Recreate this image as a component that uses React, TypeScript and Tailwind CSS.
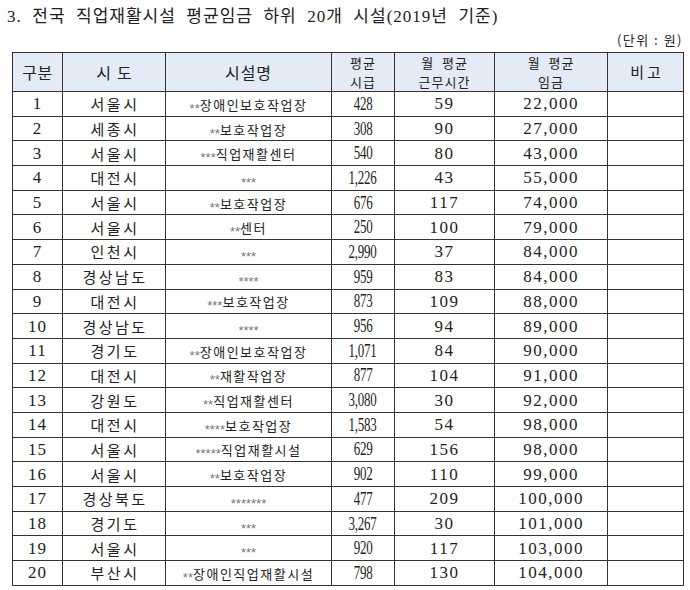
const rows: [number, string, string, string, string, string][] = [
  [1, "서울시", "**|장애인보호작업장", "428", "59", "22,000"],
  [2, "세종시", "**|보호작업장", "308", "90", "27,000"],
  [3, "서울시", "***|직업재활센터", "540", "80", "43,000"],
  [4, "대전시", "***|", "1,226", "43", "55,000"],
  [5, "서울시", "**|보호작업장", "676", "117", "74,000"],
  [6, "서울시", "**|센터", "250", "100", "79,000"],
  [7, "인천시", "***|", "2,990", "37", "84,000"],
  [8, "경상남도", "****|", "959", "83", "84,000"],
  [9, "대전시", "***|보호작업장", "873", "109", "88,000"],
  [10, "경상남도", "****|", "956", "94", "89,000"],
  [11, "경기도", "**|장애인보호작업장", "1,071", "84", "90,000"],
  [12, "대전시", "**|재활작업장", "877", "104", "91,000"],
  [13, "강원도", "**|직업재활센터", "3,080", "30", "92,000"],
  [14, "대전시", "****|보호작업장", "1,583", "54", "98,000"],
  [15, "서울시", "*****|직업재활시설", "629", "156", "98,000"],
  [16, "서울시", "**|보호작업장", "902", "110", "99,000"],
  [17, "경상북도", "*******|", "477", "209", "100,000"],
  [18, "경기도", "***|", "3,267", "30", "101,000"],
  [19, "서울시", "***|", "920", "117", "103,000"],
  [20, "부산시", "**|장애인직업재활시설", "798", "130", "104,000"],
];

const serif = "font-['Liberation_Serif','Noto_Sans_CJK_KR',serif]";
const kr = "font-['Noto_Sans_CJK_KR','Liberation_Sans',sans-serif]";

const App = () => {
  return (
    <div className="w-[690px] h-[590px] bg-white text-[#222] overflow-hidden">
      {/* Title */}
      <h1 className={`pl-[7px] pt-[6px] h-[28px] text-[17px] leading-[22px] tracking-[1px] font-normal ${serif}`}>
        3.&nbsp; 전국&nbsp; 직업재활시설&nbsp; 평균임금&nbsp; 하위&nbsp; 20개&nbsp; 시설(2019년&nbsp; 기준)
      </h1>
      <div className={`h-[24px] leading-[24px] text-right pr-[7px] text-[13px] tracking-[1.5px] ${kr}`}>
        (단위&nbsp;:&nbsp;원)
      </div>

      {/* Table */}
      <table className="ml-[12px] w-[671px] table-fixed border-collapse border border-[#333]">
        <colgroup>
          <col className="w-[50px]" />
          <col className="w-[103px]" />
          <col className="w-[166px]" />
          <col className="w-[63px]" />
          <col className="w-[100px]" />
          <col className="w-[113px]" />
          <col className="w-[76px]" />
        </colgroup>
        <thead>
          <tr className={`h-[38px] bg-[#e2ebf6] ${kr}`}>
            <th className="border border-[#333] font-normal text-[16px] tracking-[0.5px]">구분</th>
            <th className="border border-[#333] font-normal text-[16px] tracking-[6px] pl-[6px]">시도</th>
            <th className="border border-[#333] font-normal text-[16px] tracking-[1px]">시설명</th>
            <th className="border border-[#333] p-0 font-normal text-[13px] leading-[19px] tracking-[1px]">
              평균
              <br />
              시급
            </th>
            <th className="border border-[#333] p-0 font-normal text-[13px] leading-[19px] tracking-[1px]">
              월&nbsp; 평균
              <br />
              근무시간
            </th>
            <th className="border border-[#333] p-0 font-normal text-[13px] leading-[19px] tracking-[1px]">
              월&nbsp; 평균
              <br />
              임금
            </th>
            <th className="border border-[#333] font-normal text-[15px] tracking-[3px] pl-[3px]">비고</th>
          </tr>
        </thead>
        <tbody>
          {rows.map(([no, sido, name, hourly, hours, wage]) => {
            const [stars, label] = name.split("|");
            return (
              <tr key={no} className="h-[24.7px]">
                <td className={`border border-[#333] text-center text-[17px] leading-none tracking-[1px] ${serif}`}>{no}</td>
                <td className={`border border-[#333] text-center text-[15px] leading-none tracking-[2.5px] pl-[2px] ${kr}`}>
                  {sido}
                </td>
                <td className="border border-[#333] text-center leading-none whitespace-nowrap">
                  <span className="inline-block translate-y-[3px] text-[13px] text-[#777] font-['Liberation_Sans',sans-serif]">
                    {stars}
                  </span>
                  <span className={`text-[13px] tracking-[1.5px] ${kr}`}>{label}</span>
                </td>
                <td className={`border border-[#333] text-center text-[18px] leading-none ${serif}`}>
                  <span className="inline-block scale-x-[0.72] tracking-[-0.3px]">{hourly}</span>
                </td>
                <td className={`border border-[#333] text-center text-[17px] leading-none tracking-[1.5px] ${serif}`}>{hours}</td>
                <td className={`border border-[#333] text-center text-[17px] leading-none tracking-[1.5px] ${serif}`}>{wage}</td>
                <td className="border border-[#333]"></td>
              </tr>
            );
          })}
        </tbody>
      </table>
    </div>
  );
};

export default App;
